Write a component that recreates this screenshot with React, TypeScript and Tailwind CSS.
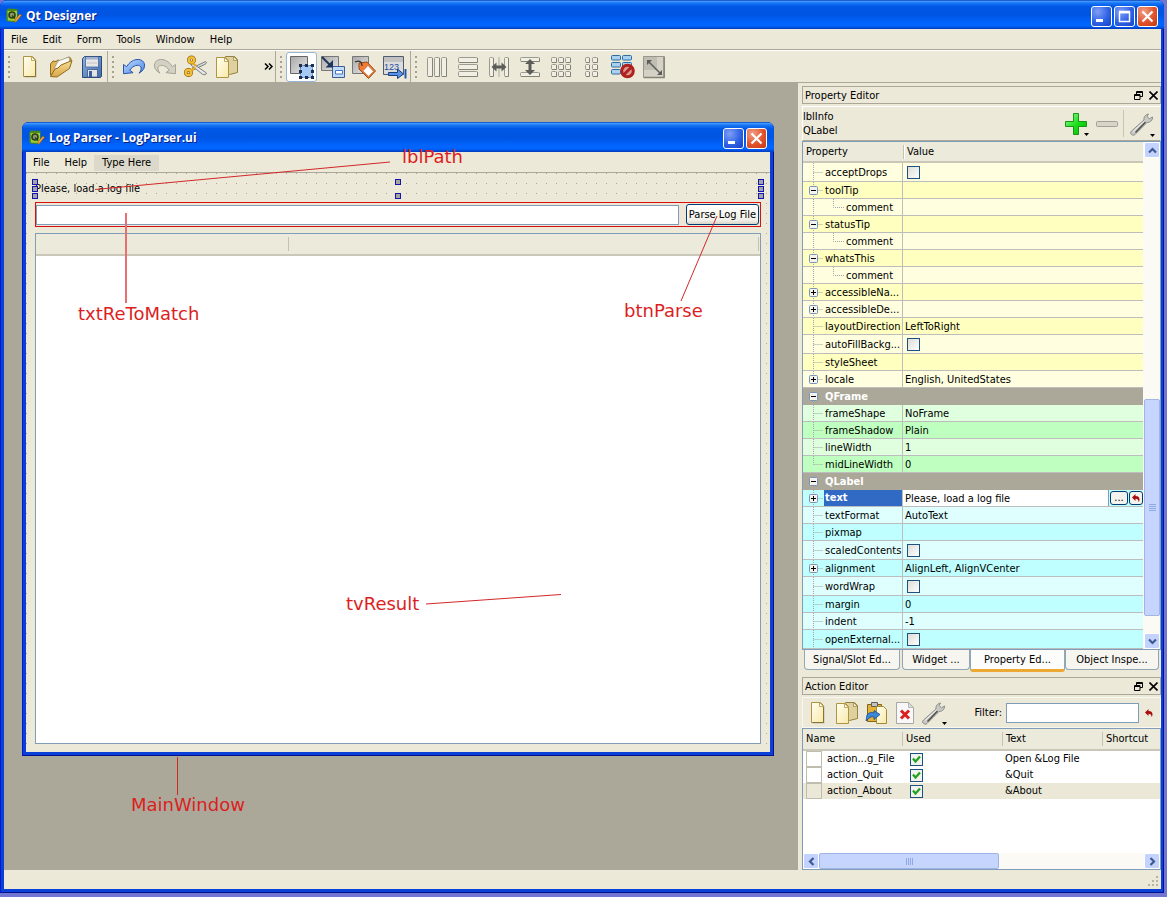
import React from 'react';

type Tone = 'yellow' | 'green' | 'cyan';

type PropertyRow = {
  name: string;
  value?: string;
  kind?: 'group' | 'check' | 'child' | 'editor';
  expander?: '+' | '-';
  tone: Tone;
  last?: boolean;
};

const properties: PropertyRow[] = [
  { name: 'acceptDrops', kind: 'check', tone: 'yellow' },
  { name: 'toolTip', expander: '-', tone: 'yellow' },
  { name: 'comment', kind: 'child', tone: 'yellow' },
  { name: 'statusTip', expander: '-', tone: 'yellow' },
  { name: 'comment', kind: 'child', tone: 'yellow' },
  { name: 'whatsThis', expander: '-', tone: 'yellow' },
  { name: 'comment', kind: 'child', tone: 'yellow' },
  { name: 'accessibleNa...', expander: '+', tone: 'yellow' },
  { name: 'accessibleDe...', expander: '+', tone: 'yellow' },
  { name: 'layoutDirection', value: 'LeftToRight', tone: 'yellow' },
  { name: 'autoFillBackg...', kind: 'check', tone: 'yellow' },
  { name: 'styleSheet', tone: 'yellow' },
  { name: 'locale', value: 'English, UnitedStates', expander: '+', tone: 'yellow', last: true },
  { name: 'QFrame', kind: 'group', tone: 'green' },
  { name: 'frameShape', value: 'NoFrame', tone: 'green' },
  { name: 'frameShadow', value: 'Plain', tone: 'green' },
  { name: 'lineWidth', value: '1', tone: 'green' },
  { name: 'midLineWidth', value: '0', tone: 'green', last: true },
  { name: 'QLabel', kind: 'group', tone: 'cyan' },
  { name: 'text', value: 'Please, load a log file', kind: 'editor', expander: '+', tone: 'cyan' },
  { name: 'textFormat', value: 'AutoText', tone: 'cyan' },
  { name: 'pixmap', tone: 'cyan' },
  { name: 'scaledContents', kind: 'check', tone: 'cyan' },
  { name: 'alignment', value: 'AlignLeft, AlignVCenter', expander: '+', tone: 'cyan' },
  { name: 'wordWrap', kind: 'check', tone: 'cyan' },
  { name: 'margin', value: '0', tone: 'cyan' },
  { name: 'indent', value: '-1', tone: 'cyan' },
  { name: 'openExternal...', kind: 'check', tone: 'cyan' },
];

// [light, dark] row backgrounds
const toneClasses: Record<Tone, [string, string]> = {
  yellow: ['bg-[#ffffdf]', 'bg-[#ffffbf]'],
  green: ['bg-[#dfffdf]', 'bg-[#bfffbf]'],
  cyan: ['bg-[#dfffff]', 'bg-[#bfffff]'],
};

const actions = [
  { name: 'action...g_File', text: 'Open &Log File' },
  { name: 'action_Quit', text: '&Quit' },
  { name: 'action_About', text: '&About' },
];

const titleGradient =
  'bg-[linear-gradient(to_bottom,#0a3fb8_0%,#3f98ff_5%,#1a78f5_10%,#0058e6_22%,#0054e0_50%,#0062fb_75%,#0066ff_88%,#0050e0_95%,#0038b8_100%)]';

/* ---------- icons ---------- */

const Icon = ({ children, size = 24 }: { children: React.ReactNode; size?: number }) => (
  <svg width={size} height={size} viewBox="0 0 24 24" fill="none" aria-hidden="true" className="shrink-0">
    {children}
  </svg>
);

const Gradients = () => (
  <svg width="0" height="0" className="absolute" aria-hidden="true">
    <defs>
      <linearGradient id="paper" x1="0" y1="0" x2="1" y2="1">
        <stop offset="0" stopColor="#fffef2" />
        <stop offset="1" stopColor="#f9e9a8" />
      </linearGradient>
      <linearGradient id="gold" x1="0" y1="0" x2="0" y2="1">
        <stop offset="0" stopColor="#f6dc96" />
        <stop offset="1" stopColor="#d9a94a" />
      </linearGradient>
      <linearGradient id="blue" x1="0" y1="0" x2="1" y2="1">
        <stop offset="0" stopColor="#c4dcff" />
        <stop offset="1" stopColor="#4585e6" />
      </linearGradient>
      <linearGradient id="floppy" x1="0" y1="0" x2="1" y2="1">
        <stop offset="0" stopColor="#8fb4e4" />
        <stop offset="1" stopColor="#3f69a6" />
      </linearGradient>
      <linearGradient id="grey" x1="0" y1="0" x2="1" y2="1">
        <stop offset="0" stopColor="#a9a9a9" />
        <stop offset="1" stopColor="#e6e6e6" />
      </linearGradient>
      <linearGradient id="plus" x1="0" y1="0" x2="1" y2="1">
        <stop offset="0" stopColor="#9dff9d" />
        <stop offset="0.5" stopColor="#1ee01e" />
        <stop offset="1" stopColor="#00b400" />
      </linearGradient>
    </defs>
  </svg>
);

const AppIcon = () => (
  <svg width="16" height="16" viewBox="0 0 16 16" aria-hidden="true" className="shrink-0">
    <path d="m.500 2.500 1.500-2 9.500.500v11l-2 2-8-.500-1-1z" fill="#4c8a16" />
    <path d="M1.500 3h9.500v10l-9-.500z" fill="#9fce35" />
    <circle cx="6" cy="7" r="3" fill="#8d9a6a" stroke="#2b3f18" strokeWidth="1.600" />
    <path d="m6 7.500 3 3" stroke="#2b3f18" strokeWidth="1.500" />
    <path d="m8.500 14.500.700-3 4.800-5.500 1.500 1.200-4.800 6z" fill="#f2a53c" stroke="#8a5414" strokeWidth=".6" />
  </svg>
);

const NewIcon = () => (
  <Icon>
    <path d="M6.500 2.500h9l3 3v17h-12z" fill="#000" opacity=".18" />
    <path d="M5.500 1.500h9l3 3v17h-12z" fill="url(#paper)" stroke="#b0953f" strokeLinejoin="round" />
    <path d="M13.500 1.500v4h4z" fill="#fff" stroke="#b0953f" strokeWidth=".8" />
    <path d="M17.500 6v15.500h-11" stroke="#8a722c" />
  </Icon>
);

const OpenIcon = () => (
  <Icon>
    <path d="M1.500 20V9l2.500-3 3 .5L9 5l3 1 8-4 2 1.500v4z" fill="#e0b658" stroke="#8f6a1c" />
    <path d="m5 14 4-8 11-4 1 6-9 10z" fill="#fbfaf0" stroke="#9a9580" strokeWidth=".8" />
    <path d="M1.500 21.500 6 14l3-1 3-3 11-4.500-2.500 8L8 22z" fill="url(#gold)" stroke="#8f6a1c" />
  </Icon>
);

const SaveIcon = () => (
  <Icon>
    <path d="M2.500 3.500l2-2h17v20l-1 1h-18z" fill="url(#floppy)" stroke="#2c4a7c" strokeLinejoin="round" />
    <path d="M5.500 2h13v10h-13z" fill="#e6e6e6" stroke="#47669a" strokeWidth=".8" />
    <path d="M6 2.500h12v2H6z" fill="#9eb2d0" />
    <path d="M7 8h10" stroke="#c2c2c2" />
    <path d="M7.500 14.500h10V22h-10z" fill="#e4e4e4" stroke="#3a5688" strokeWidth=".8" />
    <path d="M9 16h3v6H9z" fill="#3c5f9c" />
  </Icon>
);

const UndoIcon = () => (
  <Icon>
    <path
      d="M1.500 9.500v9.200l9.600-1-3.300-2.500c3.200-5 8.700-6 10.700-3.700 1.400 1.700.5 4.200-1.500 6.700 4.700-2.500 7-7.200 4.700-10.900C18.800 2.600 9.500 3.400 4.600 11.700z"
      fill="url(#blue)"
      stroke="#2a55ad"
    />
  </Icon>
);

const RedoIcon = () => (
  <Icon>
    <path
      d="M22.500 9.500v9.200l-9.600-1 3.300-2.500c-3.200-5-8.700-6-10.700-3.700-1.400 1.700-.5 4.200 1.500 6.700-4.700-2.500-7-7.200-4.700-10.900C5.200 2.600 14.500 3.400 19.400 11.700z"
      fill="#d3d0c4"
      stroke="#a5a296"
    />
  </Icon>
);

const CutIcon = () => (
  <Icon>
    <path d="m8 13 13.500-6.500c2 1 .5 2.500-1 3L9.500 15z" fill="#d5d8dc" stroke="#666" strokeWidth=".8" />
    <path d="m8 8 14.500 10c-.5 2-2 2-4 1.300L7 10z" fill="#e4e6e8" stroke="#666" strokeWidth=".8" />
    <circle cx="7.500" cy="5" r="2.700" stroke="#94680c" strokeWidth="3.600" />
    <circle cx="7.500" cy="5" r="2.700" stroke="#f4c035" strokeWidth="2.200" />
    <ellipse cx="4.500" cy="17.500" rx="2.800" ry="2.600" stroke="#94680c" strokeWidth="3.600" />
    <ellipse cx="4.500" cy="17.500" rx="2.800" ry="2.600" stroke="#f4c035" strokeWidth="2.200" />
    <path d="m7 15.500 4.500-3M9 8l3 3" stroke="#e4aa26" strokeWidth="2.200" />
  </Icon>
);

const CopyIcon = () => (
  <Icon>
    <path d="M10.500 1.500h9l3 3v13l-8 2h-4z" fill="#dfd0a0" stroke="#95823f" />
    <path d="M18.500 1.500v4h4z" fill="#f3ebcd" stroke="#95823f" strokeWidth=".7" />
    <path d="M1.500 2.500h9l3 3v17h-12z" fill="url(#paper)" stroke="#b0953f" strokeLinejoin="round" />
    <path d="M9.500 2.500v4h4z" fill="#fff" stroke="#b0953f" strokeWidth=".8" />
  </Icon>
);

const EditWidgetsIcon = () => (
  <Icon>
    <path d="M.5 1.500h17v17H.5z" fill="url(#grey)" stroke="#666" />
    <path d="M10.500 10.500h12v12h-12z" fill="#a6c8f5" stroke="#2e5a9c" strokeDasharray="2 1" />
    <path d="M9 9h3v3H9zM15 9h3v3h-3zM21 9h3v3h-3zM9 15h3v3H9zM21 15h3v3h-3zM9 21h3v3H9zM15 21h3v3h-3zM21 21h3v3h-3z" fill="#1c2f50" />
  </Icon>
);

const SignalsIcon = () => (
  <Icon>
    <path d="M.5 1.500h17v14H.5z" fill="url(#grey)" stroke="#777" />
    <path d="M11.500 11.500h12v11h-12z" fill="#c3dbfa" stroke="#3c5f92" />
    <path d="M14.500 15.500h7v3.500h-7z" fill="#fff" stroke="#4574b8" />
    <path d="m1 2 9 9" stroke="#1e3659" strokeWidth="2" />
    <path d="M12 12.500V5l-7.500 7.500z" fill="#1e3659" />
  </Icon>
);

const BuddyIcon = () => (
  <Icon>
    <path d="M.5 1.500h16v17H.5z" fill="url(#grey)" stroke="#777" />
    <path d="m7 8 8-1 8.500 9-7 7.500L7 14z" fill="#ee7c38" stroke="#9c4a18" strokeLinejoin="round" />
    <path d="m16 10.500 5.500 5.800-5 5.200-5.500-5.700z" fill="#fff" stroke="#c66a30" strokeWidth=".7" />
    <path d="M3 7c5-2 7 0 7 4" stroke="#333" strokeWidth="1.300" />
  </Icon>
);

const TabOrderIcon = () => (
  <Icon>
    <path d="M.5 1.500h20v18H.5z" fill="#dcdcdc" stroke="#4f5c70" />
    <path d="M1 2h19v5H1z" fill="#c1c1c1" />
    <text x="1" y="14.500" fontSize="9" fill="#1d4fa0" fontFamily="Liberation Sans, sans-serif">123</text>
    <path d="M5.500 17.500h9V14l6 5-6 4.500v-3h-9z" fill="#5a92e4" stroke="#173e80" />
    <path d="M21.500 14v9.500h2V14z" fill="#2458b0" />
  </Icon>
);

// disabled layout icons are built from embossed cells: [x, y, width, height]
const Cells = ({ rects }: { rects: number[][] }) => (
  <>
    {rects.map(([x, y, w, h]) => (
      <React.Fragment key={`${x}-${y}`}>
        <rect x={x + 0.5} y={y + 0.5} width={w} height={h} rx="1" fill="#f1efe4" stroke="#9d9b8f" />
        <path d={`M${x + 1} ${y + h + 0.5}h${w - 0.5}v${0.5 - h}`} stroke="#858378" />
      </React.Fragment>
    ))}
  </>
);

const HorizontalLayoutIcon = () => (
  <Icon><Cells rects={[[2, 2, 5, 19], [9, 2, 5, 19], [16, 2, 5, 19]]} /></Icon>
);
const VerticalLayoutIcon = () => (
  <Icon><Cells rects={[[2, 2, 19, 5], [2, 9, 19, 5], [2, 16, 19, 5]]} /></Icon>
);
const HorizontalSplitterIcon = () => (
  <Icon>
    <Cells rects={[[2, 2, 4, 19], [17, 2, 4, 19]]} />
    <path d="M12 2v20" stroke="#aaa89c" />
    <path d="m4.500 12 5-4.500v3h5v-3l5 4.500-5 4.500v-3h-5v3z" fill="#5c5c58" />
  </Icon>
);
const VerticalSplitterIcon = () => (
  <Icon>
    <Cells rects={[[2, 2, 19, 4], [2, 17, 19, 4]]} />
    <path d="m12 4 5 5h-3.500v6H17l-5 5-5-5h3.500V9H7z" fill="#5c5c58" />
  </Icon>
);
const GridLayoutIcon = () => (
  <Icon>
    <Cells rects={[2, 9, 16].flatMap((y) => [2, 9, 16].map((x) => [x, y, 5, 5]))} />
  </Icon>
);
const FormLayoutIcon = () => (
  <Icon>
    <Cells rects={[2, 9, 16].flatMap((y) => [[5, y, 4, 5], [12, y, 5, 5]])} />
  </Icon>
);
const BreakLayoutIcon = () => (
  <Icon>
    {[1, 8, 15].map((y) => (
      <React.Fragment key={y}>
        <rect x="0.500" y={y - 0.5} width="9" height="4.500" rx="1" fill="#a9d2f0" stroke="#2d6d9f" />
        <rect x="11.500" y={y - 0.5} width="9" height="4.500" rx="1" fill="#a9d2f0" stroke="#2d6d9f" />
      </React.Fragment>
    ))}
    <circle cx="16.500" cy="16" r="5.800" fill="#d99a94" stroke="#b0201c" strokeWidth="3" />
    <path d="m12.500 20 8-8" stroke="#b0201c" strokeWidth="3" />
  </Icon>
);
const AdjustSizeIcon = () => (
  <Icon>
    <path d="M1.500 1.500h21v21h-21z" fill="#d5d2c5" stroke="#98968a" />
    <path d="M2 2h13v13H2z" fill="#c0beb2" />
    <path d="M22 2v20.500H2" stroke="#858378" strokeWidth="1.500" />
    <path d="m6 6 12 12" stroke="#5c5c58" strokeWidth="1.500" />
    <path d="M5 5h5l-5 5zM20 20h-5l5-5z" fill="#5c5c58" />
  </Icon>
);

const WrenchIcon = () => (
  <Icon>
    <path d="M1.500 22.500c-1.500-1-1-2.500 0-3.500L14 8c-.5-3 1.500-5.500 4.500-6L17 4.500l2.500 2.300L22.500 5c.3 3-2 5.500-5.500 5.500L5 22.500c-1 1-2.500.8-3.500 0z" fill="#c9c9c5" stroke="#7a7a76" strokeWidth=".8" />
    <path d="m5.500 20.500 10-10.500" stroke="#4c4c4a" strokeWidth="1.400" />
    <path d="M3 19.500 14.500 9" stroke="#f4f4f2" />
  </Icon>
);

const PasteIcon = () => (
  <Icon>
    <path d="M3.500 3.500h14v17h-14z" fill="#e2b336" stroke="#86641a" />
    <path d="M7.500 1.500h6v4h-6z" fill="#c3c3c3" stroke="#5e5e5e" />
    <path d="M12.500 5.500h7l3 3v14h-10z" fill="url(#paper)" stroke="#a58a35" />
    <path d="m2 20 1-6c2-3 6-3 7-2V9.500l6 4-6 5V16c-3-1-5 1-8 4z" fill="#3d86d8" stroke="#174a90" strokeWidth=".8" />
  </Icon>
);

const DeleteIcon = () => (
  <Icon>
    <path d="M3.500 1.500h12l5 5v16h-17z" fill="#f8f8f8" stroke="#a8a8a8" />
    <path d="M15.500 1.500v5h5z" fill="#dcdcdc" stroke="#a8a8a8" strokeWidth=".8" />
    <path d="m8 9.500 8 8m0-8-8 8" stroke="#d9201f" strokeWidth="3" />
  </Icon>
);

const AddIcon = () => (
  <Icon>
    <path d="M9.500 1.500h5v8h8v5h-8v8h-5v-8h-8v-5h8z" fill="url(#plus)" stroke="#159615" />
  </Icon>
);

const RemoveIcon = () => (
  <Icon>
    <rect x="1.500" y="9.500" width="21" height="5" rx="1" fill="#d8d5c8" stroke="#a3a196" />
  </Icon>
);

const ResetIcon = () => (
  <svg width="8" height="8" viewBox="0 0 8 8" aria-hidden="true">
    <path d="M3.500 0v2C6 2 7.500 3 7.500 5.500c0 1-.5 2-1 2.500 0-2-1-3.200-3-3.200V7L0 3.500z" fill="#a80c0c" />
  </svg>
);

const DropArrow = () => (
  <svg width="5" height="3" viewBox="0 0 5 3" aria-hidden="true" className="-ml-1 self-end">
    <path d="M0 0h5L2.500 3z" fill="#000" />
  </svg>
);

const Chevron = ({ d }: { d: string }) => (
  <svg width="9" height="9" viewBox="0 0 9 9" aria-hidden="true">
    <path d={d} fill="none" stroke="#3f5a92" strokeWidth="2.200" />
  </svg>
);

/* ---------- window chrome ---------- */

const windowButton =
  'flex size-[21px] items-center justify-center rounded-[3px] border border-white';

const WindowButton = ({ kind }: { kind: 'minimize' | 'maximize' | 'close' }) => (
  <button
    aria-label={kind}
    className={
      kind === 'close'
        ? `${windowButton} bg-[radial-gradient(circle_at_30%_25%,#f0a088,#e2532c_55%,#c23a10)]`
        : `${windowButton} bg-[radial-gradient(circle_at_30%_25%,#7f9ff5,#2f62e6_55%,#1541c4)]`
    }
  >
    <svg width="13" height="13" viewBox="0 0 13 13" fill="none" stroke="#fff" aria-hidden="true">
      {kind === 'minimize' && <path d="M1 10.500h7" strokeWidth="3" />}
      {kind === 'maximize' && <path d="M1.500 11.500v-9h10v9zM1 2.500h11" strokeWidth="1.500" />}
      {kind === 'maximize' && <path d="M1 2h11" strokeWidth="2.500" />}
      {kind === 'close' && <path d="m1.500 1.500 10 10m0-10-10 10" strokeWidth="2.200" />}
    </svg>
  </button>
);

const TitleText = ({ children }: { children: React.ReactNode }) => (
  <h1 className="flex-1 whitespace-pre font-['Open_Sans',sans-serif] text-[12px] font-bold text-white [text-shadow:1px_1px_#0a1f80]">
    {children}
  </h1>
);

const ToolButton = ({ label, active, children }: { label: string; active?: boolean; children: React.ReactNode }) => (
  <button
    aria-label={label}
    className={
      active
        ? 'flex h-[30px] w-[31px] items-center justify-center rounded-[3px] border border-[#98b5d6] bg-white'
        : 'flex h-[30px] w-[31px] items-center justify-center'
    }
  >
    {children}
  </button>
);

const ToolGroup = ({ children, last }: { children: React.ReactNode; last?: boolean }) => (
  <div className={last ? 'flex h-full items-center' : 'flex h-full items-center border-r border-[#aca899]'}>
    <div className="flex w-[10px] flex-col items-center gap-[3px]">
      {[0, 1, 2, 3, 4].map((dot) => (
        <span key={dot} className="size-[2px] bg-[#a5a294]" />
      ))}
    </div>
    {children}
  </div>
);

const DockTitle = ({ children }: { children: React.ReactNode }) => (
  <div className="flex h-[18px] items-center border border-[#aca899] px-[2px]">
    <h2 className="flex-1 pt-px">{children}</h2>
    <button aria-label="Float" className="mr-[6px]">
      <svg width="9" height="9" viewBox="0 0 9 9" fill="none" stroke="#000" aria-hidden="true">
        <path d="M2.500 3V.5h6v5H6M2 1.500h7M.5 3.500h5.500v5H.5zM0 4.500h6" />
      </svg>
    </button>
    <button aria-label="Close">
      <svg width="9" height="9" viewBox="0 0 9 9" fill="none" stroke="#000" strokeWidth="1.600" aria-hidden="true">
        <path d="m.5.5 8 8m0-8-8 8" />
      </svg>
    </button>
  </div>
);

const ScrollButton = ({ label, d }: { label: string; d: string }) => (
  <button
    aria-label={label}
    className="flex size-[16px] shrink-0 items-center justify-center rounded-[2px] border border-white bg-[#c3d3fd]"
  >
    <Chevron d={d} />
  </button>
);

/* ---------- property editor ---------- */

const TreeLines = ({ row }: { row: PropertyRow }) => {
  const height = row.kind === 'check' ? 19 : 17;
  const mid = Math.floor(height / 2) + 0.5;
  const child = row.kind === 'child';
  return (
    <svg width={child ? 42 : 21} height={height} fill="none" aria-hidden="true" className="shrink-0">
      <path d={`M10.500 0V${row.last ? mid : height}`} stroke="#a5a5a5" strokeDasharray="1 1" />
      {child ? (
        <path d={`M30.500 0V${mid}H41`} stroke="#a5a5a5" strokeDasharray="1 1" />
      ) : (
        <path d={`M10.500 ${mid}H20`} stroke="#a5a5a5" strokeDasharray="1 1" />
      )}
      {row.expander && <ExpanderBox y={mid} plus={row.expander === '+'} />}
    </svg>
  );
};

const ExpanderBox = ({ y, plus }: { y: number; plus: boolean }) => (
  <>
    <rect x="6.500" y={y - 4} width="8" height="8" rx="1" fill="#f4f3ee" stroke="#7b93b5" />
    <path d={`M8 ${y}h5`} stroke="#000" />
    {plus && <path d={`M10.500 ${y - 2.5}v5`} stroke="#000" />}
  </>
);

const checkBox =
  'block size-[13px] appearance-none border border-[#1c5180] bg-[linear-gradient(135deg,#dcdcd7,#fff)]';

const GroupRow = ({ row }: { row: PropertyRow }) => (
  <tr className="h-[17px] bg-[#aca899] font-bold text-white">
    <td colSpan={2} className="p-0">
      <div className="flex h-[17px] items-center gap-px">
        <svg width="21" height="17" aria-hidden="true" className="shrink-0">
          <ExpanderBox y={8.5} plus={false} />
        </svg>
        {row.name}
      </div>
    </td>
  </tr>
);

const PropertyValue = ({ row }: { row: PropertyRow }) => {
  if (row.kind === 'check') {
    return <input type="checkbox" aria-label={row.name} className={`${checkBox} ml-[4px]`} />;
  }
  if (row.kind === 'editor') {
    return (
      <div className="flex h-[16px] items-center gap-px">
        <input
          aria-label={row.name}
          defaultValue={row.value}
          className="h-[16px] min-w-0 flex-1 border-r border-[#7f9db9] bg-white pt-px pl-[2px] outline-none"
        />
        <button aria-label="Edit text" className="flex h-[14px] w-[18px] items-center justify-center rounded-[3px] border border-[#003c74] bg-[#f3f2ec] leading-[8px]">
          ...
        </button>
        <button aria-label="Reset" className="flex h-[14px] w-[14px] items-center justify-center rounded-[3px] border border-[#003c74] bg-[#f3f2ec]">
          <ResetIcon />
        </button>
      </div>
    );
  }
  return <span className="block pt-px pl-[2px]">{row.value}</span>;
};

const PropertyEditor = () => (
  <section>
    <DockTitle>Property Editor</DockTitle>
    <div className="mt-[2px] flex h-[35px] items-center border border-t-white border-r-[#dedbc9] border-b-[#aca899] border-l-white">
      <div className="flex-1 leading-[14px]">
        <p>lblInfo</p>
        <p>QLabel</p>
      </div>
      <button aria-label="Add property" className="flex"><AddIcon /><DropArrow /></button>
      <button aria-label="Remove property" className="mr-[4px] ml-[6px]"><RemoveIcon /></button>
      <button aria-label="Configure" className="mr-[5px] flex h-[27px] items-center border-l border-[#c8c5b6] pl-[6px]">
        <WrenchIcon />
        <DropArrow />
      </button>
    </div>
    <div className="flex border border-[#7f9db9] bg-white">
      <table className="flex-1 table-fixed border-separate border-spacing-0">
        <thead>
          <tr className="h-[21px] bg-[#ebeadb] text-left">
            <th className="w-[100px] border-b-2 border-[#cbc7b8] p-0 pl-[3px] font-normal">Property</th>
            <th className="border-b-2 border-[#cbc7b8] p-0 font-normal">
              <span className="block border-l border-[#c5c2b4] pl-[3px] shadow-[inset_1px_0_#fff]">Value</span>
            </th>
          </tr>
        </thead>
        <tbody>
          {properties.map((row, index) => {
            if (row.kind === 'group') {
              return <GroupRow key={index} row={row} />;
            }
            const height = row.kind === 'check' ? 'h-[18px]' : 'h-[16px]';
            return (
              <tr key={index} className={toneClasses[row.tone][index % 2]}>
                <td className="border-r border-b border-[#bdbdbd] p-0">
                  <div className={`flex items-center overflow-hidden whitespace-nowrap ${height}`}>
                    <TreeLines row={row} />
                    {row.kind === 'editor' ? (
                      <span className="h-[16px] flex-1 bg-[#316ac5] pl-px leading-[16px] font-bold text-white">{row.name}</span>
                    ) : (
                      <span className="pt-px pl-px">{row.name}</span>
                    )}
                  </div>
                </td>
                <td className="border-b border-[#bdbdbd] p-0">
                  <div className={`flex flex-col justify-center ${height}`}>
                    <PropertyValue row={row} />
                  </div>
                </td>
              </tr>
            );
          })}
        </tbody>
      </table>
      <div className="flex w-[17px] flex-col bg-[#fbfaf4] pl-px">
        <ScrollButton label="Scroll up" d="m1 6.500 3.500-3.500L8 6.500" />
        <div className="flex-[240]" />
        <div className="flex flex-[215] flex-col items-center justify-center gap-px rounded-[2px] border border-[#9fb5e8] bg-[#c6d5fd]">
          {[0, 1, 2, 3].map((line) => (
            <span key={line} className="h-px w-[7px] bg-[#8fa9e4]" />
          ))}
        </div>
        <div className="flex-[17]" />
        <ScrollButton label="Scroll down" d="M1 2.500 4.500 6 8 2.500" />
      </div>
    </div>
    <div className="flex h-[22px] items-start px-[2px]">
      <button className="mr-[2px] h-[20px] w-[96px] rounded-b-[4px] border border-t-0 border-[#91a7b4] bg-[#f6f5f0]">Signal/Slot Ed...</button>
      <button className="h-[20px] w-[68px] rounded-b-[4px] border border-t-0 border-[#91a7b4] bg-[#f6f5f0]">Widget ...</button>
      <button className="h-[22px] w-[95px] rounded-b-[3px] border-x border-b-[3px] border-x-[#91a7b4] border-b-[#eda733] bg-[#fcfcfa]">Property Ed...</button>
      <button className="h-[20px] flex-1 rounded-b-[4px] border border-t-0 border-[#91a7b4] bg-[#f6f5f0]">Object Inspe...</button>
    </div>
  </section>
);

/* ---------- action editor ---------- */

const ActionEditor = () => (
  <section className="mt-[5px] flex flex-1 flex-col">
    <DockTitle>Action Editor</DockTitle>
    <div className="mt-[2px] flex h-[31px] items-center border border-[#f8f7f0] pl-[3px]">
      <button aria-label="New action" className="w-[29px]"><NewIcon /></button>
      <button aria-label="Copy action" className="w-[29px]"><CopyIcon /></button>
      <button aria-label="Paste action" className="w-[29px]"><PasteIcon /></button>
      <button aria-label="Delete action" className="w-[29px]"><DeleteIcon /></button>
      <button aria-label="Configure actions" className="flex"><WrenchIcon /><DropArrow /></button>
      <label htmlFor="filter" className="mr-1 ml-auto">Filter:</label>
      <input id="filter" className="h-[20px] w-[133px] border border-[#7f9db9] bg-white px-1 outline-none" />
      <button aria-label="Clear filter" className="mr-[7px] ml-[6px]"><ResetIcon /></button>
    </div>
    <div className="flex flex-1 flex-col border border-[#7f9db9] bg-white">
      <table className="w-full table-fixed border-separate border-spacing-0">
        <thead>
          <tr className="h-[22px] bg-[#ebeadb] text-left">
            {['Name', 'Used', 'Text', 'Shortcut'].map((heading) => (
              <th
                key={heading}
                className={
                  heading === 'Shortcut'
                    ? 'border-b-2 border-[#cbc7b8] p-0 pl-[3px] font-normal'
                    : 'w-[100px] border-b-2 border-[#cbc7b8] p-0 font-normal'
                }
              >
                {heading === 'Shortcut' ? heading : (
                  <span className="block border-r border-[#c5c2b4] pl-[3px]">{heading}</span>
                )}
              </th>
            ))}
          </tr>
        </thead>
        <tbody>
          {actions.map((action, index) => (
            <tr key={action.name} className={index === 2 ? 'h-[16px] bg-[#ebe8d8]' : 'h-[16px]'}>
              <td className="p-0">
                <div className="flex h-[16px] items-center gap-[5px] whitespace-nowrap">
                  <span className="ml-[3px] h-[16px] w-[16px] border border-[#c0bdae]" />
                  {action.name}
                </div>
              </td>
              <td className="p-0">
                <label className="ml-[7px] flex size-[13px] items-center justify-center border border-[#1c5180] bg-[#f2f2ee]">
                  <input type="checkbox" defaultChecked aria-label={action.name} className="peer sr-only" />
                  <svg width="9" height="9" viewBox="0 0 9 9" fill="none" aria-hidden="true" className="hidden peer-checked:block">
                    <path d="M1 3.500 3.500 6.500 8 1.500" stroke="#21a121" strokeWidth="2.200" />
                  </svg>
                </label>
              </td>
              <td className="p-0 pl-[2px] whitespace-nowrap">{action.text}</td>
              <td className="p-0" />
            </tr>
          ))}
        </tbody>
      </table>
      <div className="mt-auto flex h-[16px] bg-[#fbfaf4]">
        <ScrollButton label="Scroll left" d="M6.500 1 3 4.500 6.500 8" />
        <div className="flex w-[180px] items-center justify-center gap-px rounded-[2px] border border-[#9fb5e8] bg-[#c6d5fd]">
          {[0, 1, 2, 3].map((line) => (
            <span key={line} className="h-[7px] w-px bg-[#8fa9e4]" />
          ))}
        </div>
        <div className="flex-1" />
        <ScrollButton label="Scroll right" d="M2.500 1 6 4.500 2.500 8" />
      </div>
    </div>
  </section>
);

/* ---------- form being designed ---------- */

const handle = 'absolute size-[6px] border border-[#1414b4] bg-[#a5a5a0]';

const FormWindow = () => (
  <div className="absolute top-[39px] left-[18px] flex h-[634px] w-[752px] flex-col overflow-hidden rounded-t-[7px] bg-[#0a3fd8] px-1 pb-1 shadow-[inset_1px_0_#0019cf,inset_-1px_-1px_#00138c]">
    <header className={`-mx-1 flex h-[30px] shrink-0 items-center gap-[4px] px-[7px] pt-[2px] ${titleGradient}`}>
      <AppIcon />
      <TitleText>Log Parser - LogParser.ui</TitleText>
      <div className="flex gap-[2px]">
        <WindowButton kind="minimize" />
        <WindowButton kind="close" />
      </div>
    </header>
    <nav className="flex h-[21px] items-center gap-[15px] border-b border-[#aca899] bg-[#ece9d8] px-[7px] pt-px">
      <button>File</button>
      <button>Help</button>
      <button className="-ml-2 h-[16px] bg-[#dcd9ca] px-2">Type Here</button>
    </nav>
    <main className="flex flex-1 flex-col bg-[#ece9d8] bg-[radial-gradient(circle_at_0.5px_0.5px,#aaa798_1px,transparent_1px)] bg-size-[10px_10px] px-[9px] pt-[6px] pb-[8px]">
      <div className="relative h-[19px] leading-[20px]">
        Please, load a log file
        <span className={`${handle} top-0 -left-[3px]`} />
        <span className={`${handle} top-[7px] -left-[3px]`} />
        <span className={`${handle} top-[14px] -left-[3px]`} />
        <span className={`${handle} top-0 left-1/2 -ml-[3px]`} />
        <span className={`${handle} top-[14px] left-1/2 -ml-[3px]`} />
        <span className={`${handle} top-0 -right-[3px]`} />
        <span className={`${handle} top-[7px] -right-[3px]`} />
        <span className={`${handle} top-[14px] -right-[3px]`} />
      </div>
      <div className="mt-1 flex h-[25px] items-center gap-[7px] border border-[#d81010] bg-[#f0e6d8] pr-px">
        <input aria-label="Regular expression" className="h-[20px] min-w-0 flex-1 border border-[#7f9db9] bg-white px-1 outline-none" />
        <button className="h-[21px] w-[73px] rounded-[3px] border border-[#003c74] bg-[linear-gradient(to_bottom,#fff,#f0efe8_80%,#d8d4c8)] whitespace-nowrap">
          Parse Log File
        </button>
      </div>
      <div className="mt-[6px] flex flex-1 flex-col border border-[#7f9db9] bg-white">
        <div className="flex h-[22px] border-b-2 border-[#cbc7b8] bg-[#ebeadb] py-[3px]">
          <span className="w-[253px] border-r border-[#c5c2b4]" />
          <span className="mr-px flex-1 border-r border-[#c5c2b4]" />
        </div>
      </div>
    </main>
  </div>
);

const note = "absolute font-['DejaVu_Sans',sans-serif] text-[18px] leading-[22px] text-[#dc1e1e]";

const Annotations = () => (
  <>
    <svg width="794" height="787" viewBox="4 83 794 787" className="absolute top-0 left-0" aria-hidden="true">
      <g stroke="#d22828" fill="none">
        <path d="M95 189.500 390 162" />
        <path d="M126 213v90" stroke="#e87070" strokeWidth="2" />
        <path d="m717 216-36 85" />
        <path d="m426 604 135-9.500" />
        <path d="M177.500 757v38" />
      </g>
    </svg>
    <span className={`${note} top-[63px] left-[398px]`}>lblPath</span>
    <span className={`${note} top-[220px] left-[74px]`}>txtReToMatch</span>
    <span className={`${note} top-[217px] left-[620px]`}>btnParse</span>
    <span className={`${note} top-[510px] left-[342px]`}>tvResult</span>
    <span className={`${note} top-[711px] left-[127px]`}>MainWindow</span>
  </>
);

const App = () => (
  <div className="flex min-h-screen flex-col bg-[#7375d2] pr-[3px] pb-[4px] font-['DejaVu_Sans_Condensed','DejaVu_Sans',sans-serif] text-[11px] leading-[14px] text-black">
    <Gradients />
    <div className="flex flex-1 flex-col overflow-hidden rounded-t-[7px] bg-[#0a3fd8] pr-[3px] pb-1 pl-1 shadow-[inset_1px_0_#0019cf,inset_-1px_-1px_#00138c]">
      <header className={`-mr-[3px] -ml-1 flex h-[29px] items-center gap-[4px] px-[6px] pt-[3px] ${titleGradient}`}>
        <AppIcon />
        <TitleText>Qt Designer</TitleText>
        <div className="flex gap-[2px]">
          <WindowButton kind="minimize" />
          <WindowButton kind="maximize" />
          <WindowButton kind="close" />
        </div>
      </header>

      <nav className="flex h-[21px] items-center gap-[15px] border-b border-[#aca899] bg-[#ece9d8] px-[7px] pt-px">
        <button>File</button>
        <button>Edit</button>
        <button>Form</button>
        <button>Tools</button>
        <button>Window</button>
        <button>Help</button>
      </nav>

      <div className="flex h-[33px] items-center border-t border-b border-t-white border-b-[#aca899] bg-[#ece9d8]">
        <ToolGroup>
          <ToolButton label="New"><NewIcon /></ToolButton>
          <ToolButton label="Open"><OpenIcon /></ToolButton>
          <ToolButton label="Save"><SaveIcon /></ToolButton>
        </ToolGroup>
        <ToolGroup>
          <ToolButton label="Undo"><UndoIcon /></ToolButton>
          <ToolButton label="Redo"><RedoIcon /></ToolButton>
          <ToolButton label="Cut"><CutIcon /></ToolButton>
          <ToolButton label="Copy"><CopyIcon /></ToolButton>
          <button aria-label="More" className="flex w-[33px] justify-end pr-[2px]">
            <svg width="9" height="7" viewBox="0 0 9 7" fill="none" stroke="#000" strokeWidth="1.500" aria-hidden="true">
              <path d="m1 .5 3 3-3 3M5 .5l3 3-3 3" />
            </svg>
          </button>
        </ToolGroup>
        <ToolGroup>
          <ToolButton label="Edit Widgets" active><EditWidgetsIcon /></ToolButton>
          <ToolButton label="Edit Signals/Slots"><SignalsIcon /></ToolButton>
          <ToolButton label="Edit Buddies"><BuddyIcon /></ToolButton>
          <ToolButton label="Edit Tab Order"><TabOrderIcon /></ToolButton>
        </ToolGroup>
        <ToolGroup last>
          <ToolButton label="Lay Out Horizontally"><HorizontalLayoutIcon /></ToolButton>
          <ToolButton label="Lay Out Vertically"><VerticalLayoutIcon /></ToolButton>
          <ToolButton label="Horizontal Splitter"><HorizontalSplitterIcon /></ToolButton>
          <ToolButton label="Vertical Splitter"><VerticalSplitterIcon /></ToolButton>
          <ToolButton label="Lay Out in a Grid"><GridLayoutIcon /></ToolButton>
          <ToolButton label="Lay Out in a Form"><FormLayoutIcon /></ToolButton>
          <ToolButton label="Break Layout"><BreakLayoutIcon /></ToolButton>
          <ToolButton label="Adjust Size"><AdjustSizeIcon /></ToolButton>
        </ToolGroup>
      </div>

      <div className="flex flex-1 bg-[#ece9d8]">
        <div className="relative flex-1 overflow-hidden bg-[#aca899]">
          <FormWindow />
          <Annotations />
        </div>
        <aside className="flex w-[363px] flex-col pt-[3px] pl-1">
          <PropertyEditor />
          <ActionEditor />
        </aside>
      </div>

      <footer className="flex h-[19px] items-end justify-end bg-[#ece9d8] p-[2px]">
        <svg width="12" height="12" viewBox="0 0 12 12" aria-hidden="true">
          <path d="M9 1h2v2H9zM5 5h2v2H5zM9 5h2v2H9zM1 9h2v2H1zM5 9h2v2H5zM9 9h2v2H9z" fill="#b8b4a2" />
        </svg>
      </footer>
    </div>
  </div>
);

export default App;
